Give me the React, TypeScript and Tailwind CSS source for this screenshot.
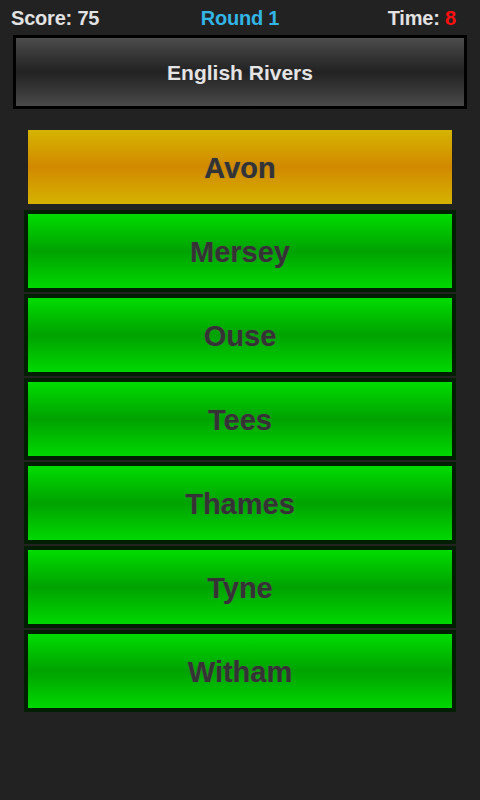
import React from 'react';

// --- DATA ---
const ANSWERS = ['Avon', 'Mersey', 'Ouse', 'Tees', 'Thames', 'Tyne', 'Witham'];
const SELECTED = 'Avon';

const font = { fontFamily: '"Liberation Sans", Arial, sans-serif' };

const AnswerButton: React.FC<{ label: string; selected: boolean }> = ({ label, selected }) => (
  <button
    className={
      selected
        ? 'h-[82px] w-full border-4 border-transparent flex items-center justify-center'
        : 'h-[82px] w-full border-4 border-[#001e00] flex items-center justify-center'
    }
  >
    <div
      className={
        selected
          ? 'w-full h-full flex items-center justify-center bg-linear-to-b from-[#d4b400] via-[#d28900] to-[#d4b200]'
          : 'w-full h-full flex items-center justify-center bg-linear-to-b from-[#00dc00] via-[#00a200] to-[#00d800]'
      }
    >
      <span className="pt-[3px] text-[29px] font-bold text-[#333] [text-shadow:0_0_1px_#666]">{label}</span>
    </div>
  </button>
);

export default function App() {
  return (
    <div className="w-[480px] h-[800px] bg-[#222] flex flex-col" style={font}>
      <header className="h-[35px] px-[11px] grid grid-cols-3 items-center text-[20px] font-bold tracking-[-0.2px]">
        <span className="text-[#e2e2e2] justify-self-start">Score: 75</span>
        <span className="text-[#33b5e5] justify-self-center">Round 1</span>
        <span className="text-[#e2e2e2] justify-self-end pr-[13px]">
          Time: <span className="text-[#ff1010]">8</span>
        </span>
      </header>

      <div className="mx-[13px] h-[74px] border-[3px] border-black bg-linear-to-b from-[#4c4c4c] via-[#222] to-[#4a4a4a] flex items-center justify-center">
        <span className="pt-[1px] text-[21px] font-bold text-[#e4e4e4]">English Rivers</span>
      </div>

      <div className="mt-[17px] px-[24px] flex flex-col gap-[2px]">
        {ANSWERS.map(a => (
          <AnswerButton key={a} label={a} selected={a === SELECTED} />
        ))}
      </div>
    </div>
  );
}
